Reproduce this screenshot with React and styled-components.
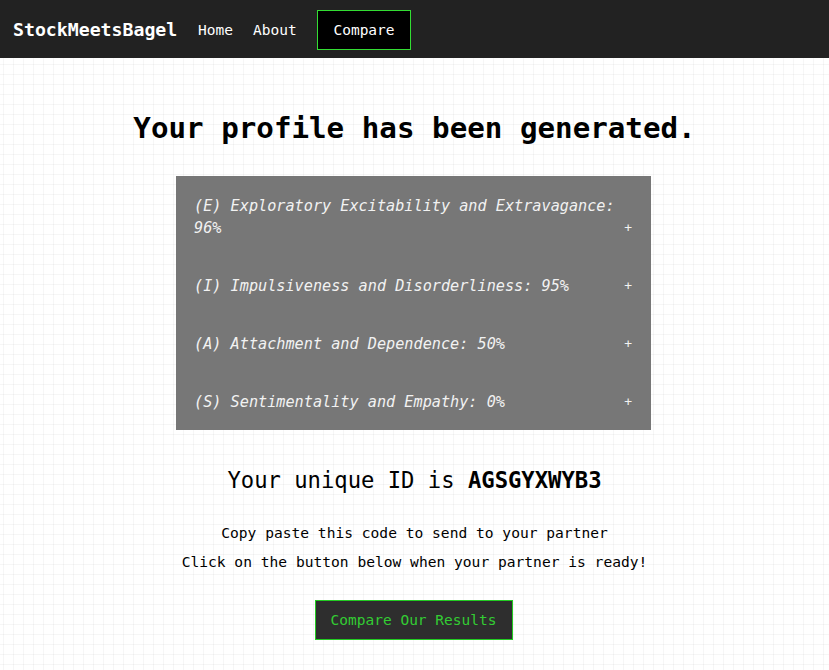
import { createGlobalStyle, styled } from "styled-components";

const GlobalStyle = createGlobalStyle`
  html, body {
    margin: 0;
    padding: 0;
  }
  body {
    font-family: "DejaVu Sans Mono", "Liberation Mono", monospace;
    background-color: #ffffff;
    background-image:
      linear-gradient(to right, rgba(0, 0, 0, 0.035) 1px, transparent 1px),
      linear-gradient(to bottom, rgba(0, 0, 0, 0.035) 1px, transparent 1px);
    background-size: 10px 10px;
    background-position: 3px 4px;
    min-height: 100vh;
  }
`;

const NavBar = styled.nav`
  height: 58px;
  background: #222222;
  display: flex;
  align-items: center;
  padding: 1px 13px 0;
  box-sizing: border-box;
`;

const Brand = styled.a`
  color: #ffffff;
  font-weight: bold;
  font-size: 18.2px;
  text-decoration: none;
  width: 185px;
`;

const NavLink = styled.a`
  color: #ffffff;
  font-size: 14.5px;
  text-decoration: none;
  width: 55px;
`;

const NavButton = styled.a`
  color: #ffffff;
  font-size: 14.5px;
  text-decoration: none;
  margin-left: 9px;
  box-sizing: border-box;
  width: 94px;
  height: 40px;
  background: #000000;
  border: 1px solid #33dd33;
  display: flex;
  align-items: center;
  justify-content: center;
`;

const Main = styled.main`
  display: flex;
  flex-direction: column;
  align-items: center;
  padding-top: 50px;
`;

const Title = styled.h1`
  margin: 0;
  font-size: 29.2px;
  line-height: 40px;
  font-weight: bold;
  color: #000000;
`;

const Traits = styled.div`
  margin-top: 28px;
  margin-right: 2px;
  width: 475px;
  background: #777777;
  display: flex;
  flex-direction: column;
`;

const Trait = styled.button`
  all: unset;
  display: flex;
  justify-content: space-between;
  align-items: flex-end;
  padding: 19px 18px 17px;
  color: #f2f2f2;
  font-family: "DejaVu Sans Mono", "Liberation Mono", monospace;
  font-style: oblique;
  font-size: 15.2px;
  line-height: 22px;
  cursor: pointer;
`;

const TraitLabel = styled.span`
  max-width: 425px;
`;

const Plus = styled.span`
  font-style: normal;
  font-size: 13px;
  padding-right: 1px;
`;

const IdLine = styled.h2`
  margin: 35px 0 0;
  font-size: 22.2px;
  line-height: 30px;
  font-weight: normal;
  color: #000000;
  b {
    font-weight: bold;
  }
`;

const Note = styled.p`
  margin: 0;
  font-size: 14.6px;
  line-height: 29px;
  color: #000000;
  text-align: center;
  ${(p) => p.$first && "margin-top: 23px;"}
`;

const CompareButton = styled.button`
  margin-top: 24px;
  margin-right: 2px;
  box-sizing: border-box;
  width: 198px;
  height: 40px;
  padding: 0;
  background: #2e2e2e;
  border: 1px solid #22cc22;
  color: #33cc33;
  font-family: "DejaVu Sans Mono", "Liberation Mono", monospace;
  font-size: 14.5px;
  cursor: pointer;
`;

const traits = [
  { key: "E", label: "Exploratory Excitability and Extravagance", value: 96 },
  { key: "I", label: "Impulsiveness and Disorderliness", value: 95 },
  { key: "A", label: "Attachment and Dependence", value: 50 },
  { key: "S", label: "Sentimentality and Empathy", value: 0 },
];

export default function App() {
  return (
    <>
      <GlobalStyle />
      <NavBar>
        <Brand href="#">StockMeetsBagel</Brand>
        <NavLink href="#">Home</NavLink>
        <NavLink href="#">About</NavLink>
        <NavButton href="#">Compare</NavButton>
      </NavBar>
      <Main>
        <Title>Your profile has been generated.</Title>
        <Traits>
          {traits.map((t) => (
            <Trait key={t.key}>
              <TraitLabel>
                ({t.key}) {t.label}: {t.value}%
              </TraitLabel>
              <Plus>+</Plus>
            </Trait>
          ))}
        </Traits>
        <IdLine>
          Your unique ID is <b>AGSGYXWYB3</b>
        </IdLine>
        <Note $first>Copy paste this code to send to your partner</Note>
        <Note>Click on the button below when your partner is ready!</Note>
        <CompareButton>Compare Our Results</CompareButton>
      </Main>
    </>
  );
}
